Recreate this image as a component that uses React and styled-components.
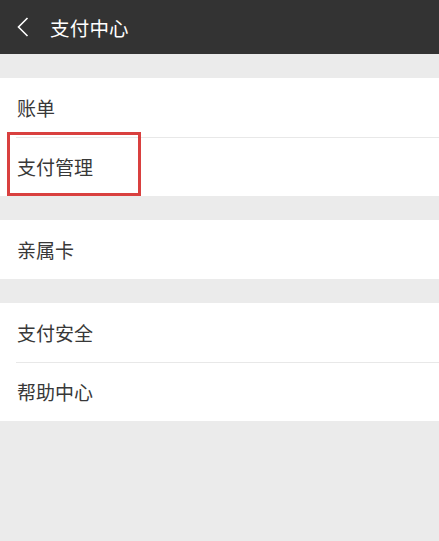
import React from 'react';
import styled, { createGlobalStyle } from 'styled-components';

const GlobalStyle = createGlobalStyle`
  html, body {
    margin: 0;
    padding: 0;
    background: #ebebeb;
  }
  body {
    font-family: "Noto Sans CJK SC", "Noto Sans", sans-serif;
  }
`;

const Page = styled.div`
  width: 439px;
  min-height: 541px;
  background: #ebebeb;
`;

const Header = styled.header`
  height: 54px;
  background: #333333;
  display: flex;
  align-items: center;
  padding-left: 16px;
  box-sizing: border-box;
`;

const BackIcon = styled.svg`
  width: 14px;
  height: 22px;
  margin-right: 20px;
`;

const Title = styled.h1`
  margin: 0;
  color: #ffffff;
  font-size: 19.5px;
  font-weight: 400;
  letter-spacing: 0.2px;
`;

const Group = styled.section`
  margin-top: 24px;
  background: #ffffff;
`;

const Row = styled.div`
  position: relative;
  height: 59px;
  box-sizing: border-box;
  display: flex;
  align-items: center;
  padding-left: 17px;
  font-size: 19px;
  color: #383838;
  & + &::before {
    content: '';
    position: absolute;
    top: 0;
    left: 16px;
    right: 0;
    height: 1px;
    background: #e8e8e8;
  }
`;

const Highlight = styled.div`
  position: absolute;
  left: 7px;
  top: -5px;
  width: 134px;
  height: 64px;
  box-sizing: border-box;
  border: 3px solid #d9403f;
  pointer-events: none;
`;

const groups = [
  [{ label: '账单' }, { label: '支付管理', marked: true }],
  [{ label: '亲属卡' }],
  [{ label: '支付安全' }, { label: '帮助中心' }],
];

export default function App() {
  return (
    <Page>
      <GlobalStyle />
      <Header>
        <BackIcon viewBox="0 0 14 22" fill="none">
          <path d="M11.5 2 L2.5 11 L11.5 20" stroke="#ffffff" strokeWidth="1.6" />
        </BackIcon>
        <Title>支付中心</Title>
      </Header>
      {groups.map((items, i) => (
        <Group key={i}>
          {items.map((item) => (
            <Row key={item.label}>
              {item.label}
              {item.marked && <Highlight />}
            </Row>
          ))}
        </Group>
      ))}
    </Page>
  );
}
